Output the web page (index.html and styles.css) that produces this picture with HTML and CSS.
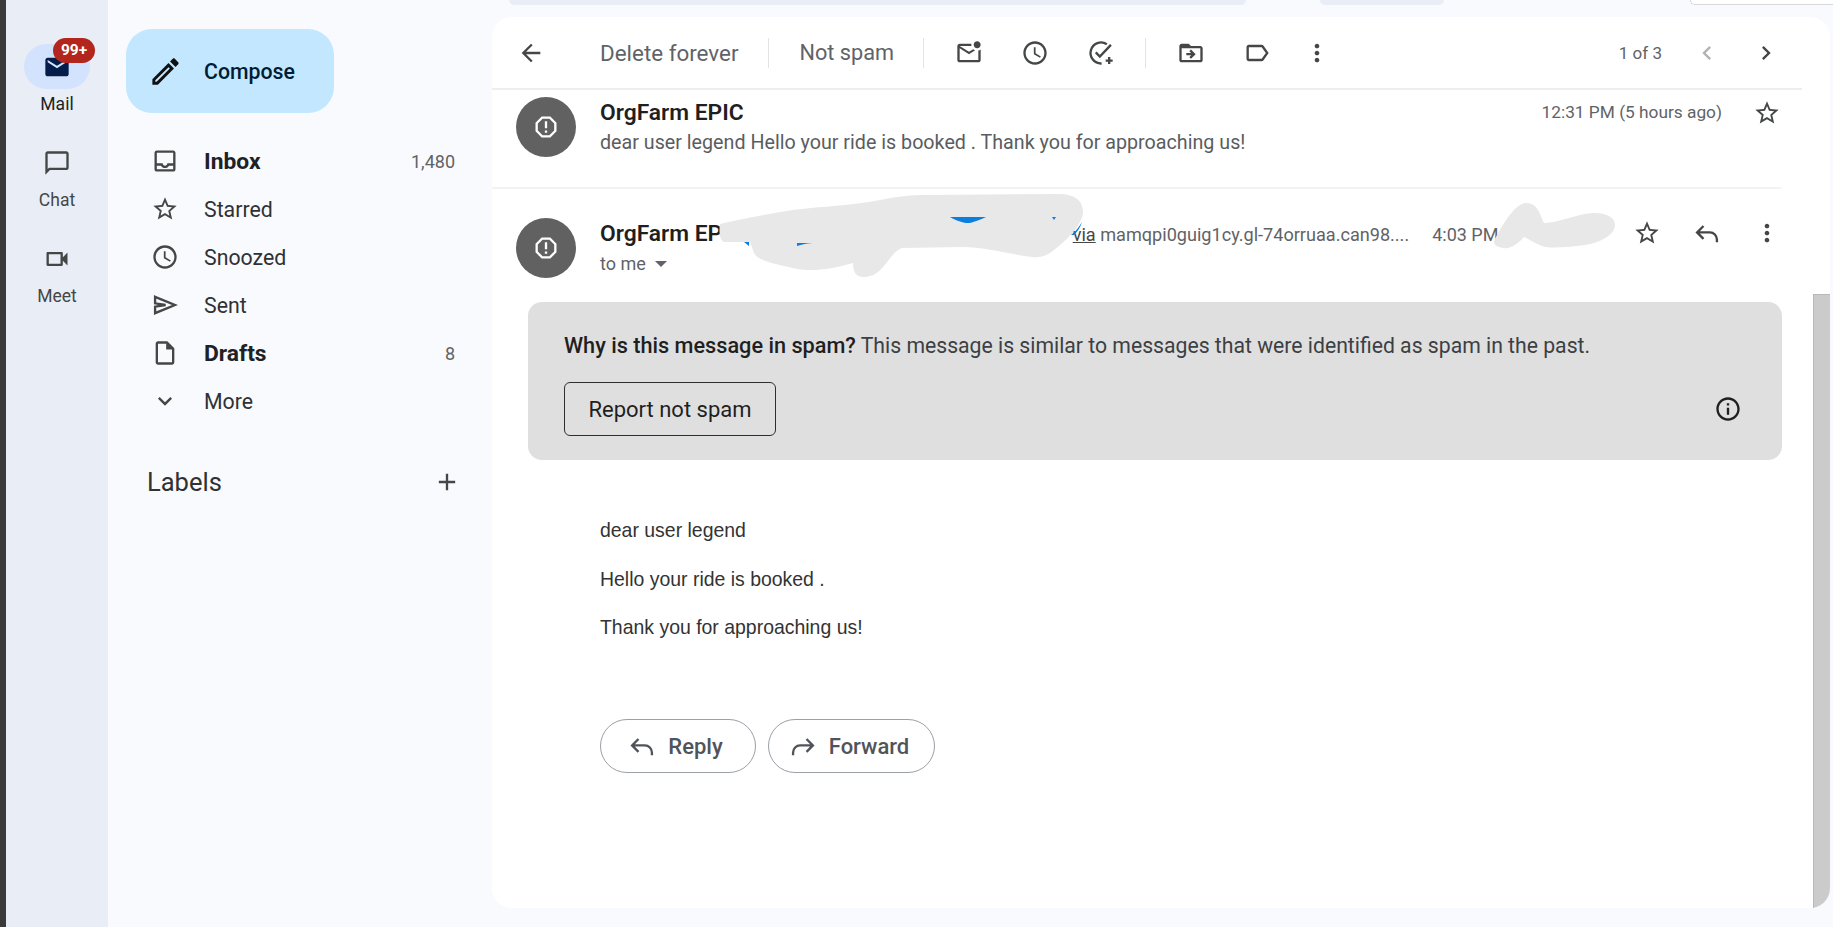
FILE: index.html
```html
<!DOCTYPE HTML>
<html lang="en">
<head>
	<title>Gmail - Spam</title>
	<meta charset="utf-8">
	<link rel="stylesheet" href="styles.css">
</head>
<body>

<!-- icon sprite -->
<svg class="sprite" xmlns="http://www.w3.org/2000/svg">
	<symbol id="i-edit" viewBox="0 0 24 24"><path d="M3 17.25V21h3.75L17.81 9.94l-3.75-3.75L3 17.25zM5.92 19H5v-.92l9.06-9.06.92.92L5.92 19zM20.71 7.04c.39-.39.39-1.02 0-1.41l-2.34-2.34c-.39-.39-1.02-.39-1.41 0l-1.83 1.83 3.75 3.75 1.83-1.83z"/></symbol>
	<symbol id="i-inbox" viewBox="0 0 24 24"><path d="M19 3H5c-1.1 0-2 .9-2 2v14c0 1.1.9 2 2 2h14c1.1 0 2-.9 2-2V5c0-1.1-.9-2-2-2zm0 16H5v-3h3.56c.69 1.19 1.97 2 3.44 2s2.75-.81 3.44-2H19v3zm0-5h-4.99c0 1.1-.9 2-2 2s-2-.9-2-2H5V5h14v9z"/></symbol>
	<symbol id="i-star" viewBox="0 0 24 24"><path d="M22 9.24l-7.19-.62L12 2 9.19 8.63 2 9.24l5.46 4.73L5.82 21 12 17.27 18.18 21l-1.63-7.03L22 9.24zM12 15.4l-3.76 2.27 1-4.28-3.32-2.88 4.38-.38L12 6.1l1.71 4.04 4.38.38-3.32 2.88 1 4.28L12 15.4z"/></symbol>
	<symbol id="i-clock" viewBox="0 0 24 24"><path d="M11.99 2C6.47 2 2 6.48 2 12s4.47 10 9.99 10C17.52 22 22 17.52 22 12S17.52 2 11.99 2zM12 20c-4.42 0-8-3.58-8-8s3.58-8 8-8 8 3.58 8 8-3.58 8-8 8zm.5-13H11v6l5.25 3.15.75-1.23-4.5-2.67z"/></symbol>
	<symbol id="i-send" viewBox="0 0 24 24"><path d="M3.5 5l17 7-17 7v-5.6l9-1.4-9-1.4z" fill="none" stroke="currentColor" stroke-width="2"/></symbol>
	<symbol id="i-draft" viewBox="0 0 24 24"><path d="M14 2H6c-1.1 0-2 .9-2 2v16c0 1.1.9 2 2 2h12c1.1 0 2-.9 2-2V8l-6-6zM6 20V4h7v5h5v11H6z"/></symbol>
	<symbol id="i-down" viewBox="0 0 24 24"><path d="M16.59 8.59L12 13.17 7.41 8.59 6 10l6 6 6-6z"/></symbol>
	<symbol id="i-plus" viewBox="0 0 24 24"><path d="M19 13h-6v6h-2v-6H5v-2h6V5h2v6h6v2z"/></symbol>
	<symbol id="i-chat" viewBox="0 0 24 24"><path d="M20 2H4c-1.1 0-2 .9-2 2v18l4-4h14c1.1 0 2-.9 2-2V4c0-1.1-.9-2-2-2zm0 14H5.17L4 17.17V4h16v12z"/></symbol>
	<symbol id="i-video" viewBox="0 0 24 24"><path d="M15 8v8H5V8h10m1-2H4c-.55 0-1 .45-1 1v10c0 .55.45 1 1 1h12c.55 0 1-.45 1-1v-3.5l4 4v-11l-4 4V7c0-.55-.45-1-1-1z"/></symbol>
	<symbol id="i-mail" viewBox="0 0 24 24"><path d="M20 4H4c-1.1 0-1.99.9-1.99 2L2 18c0 1.1.9 2 2 2h16c1.1 0 2-.9 2-2V6c0-1.1-.9-2-2-2zm0 4l-8 5-8-5V6l8 5 8-5v2z"/></symbol>
	<symbol id="i-back" viewBox="0 0 24 24"><path d="M20 11H7.83l5.59-5.59L12 4l-8 8 8 8 1.41-1.41L7.83 13H20v-2z"/></symbol>
	<symbol id="i-unread" viewBox="0 0 24 24"><path d="M22 8.98V18c0 1.1-.9 2-2 2H4c-1.1 0-2-.9-2-2V6c0-1.1.9-2 2-2h10.1c-.06.32-.1.66-.1 1s.04.68.1 1H4l8 5 3.67-2.29c.47.43 1.02.76 1.63.98L12 13 4 8v10h16V9.9c.74-.15 1.42-.48 2-.92zM16 5c0 1.66 1.34 3 3 3s3-1.34 3-3-1.34-3-3-3-3 1.34-3 3z"/></symbol>
	<symbol id="i-task" viewBox="0 0 24 24"><path d="M17 4.5A9 9 0 1 0 12.5 21M7.5 11.5l3.5 3.5 9.5-10M19 15.5v6M16 18.5h6" fill="none" stroke="currentColor" stroke-width="2"/></symbol>
	<symbol id="i-move" viewBox="0 0 24 24"><path d="M20 6h-8l-2-2H4c-1.1 0-2 .9-2 2v12c0 1.1.9 2 2 2h16c1.1 0 2-.9 2-2V8c0-1.1-.9-2-2-2zm0 12H4V8h16v10zm-8.01-9l-1.41 1.41L12.16 12H8v2h4.16l-1.59 1.59L11.99 17 16 13.01 11.99 9z"/></symbol>
	<symbol id="i-label" viewBox="0 0 24 24"><path d="M17.63 5.84C17.27 5.33 16.67 5 16 5L5 5.01C3.9 5.01 3 5.9 3 7v10c0 1.1.9 1.99 2 1.99L16 19c.67 0 1.27-.33 1.63-.84L22 12l-4.37-6.16zM16 17H5V7h11l3.55 5L16 17z"/></symbol>
	<symbol id="i-dots" viewBox="0 0 24 24"><path d="M12 8c1.1 0 2-.9 2-2s-.9-2-2-2-2 .9-2 2 .9 2 2 2zm0 2c-1.1 0-2 .9-2 2s.9 2 2 2 2-.9 2-2-.9-2-2-2zm0 6c-1.1 0-2 .9-2 2s.9 2 2 2 2-.9 2-2-.9-2-2-2z"/></symbol>
	<symbol id="i-prev" viewBox="0 0 24 24"><path d="M15.41 7.41L14 6l-6 6 6 6 1.41-1.41L10.83 12z"/></symbol>
	<symbol id="i-next" viewBox="0 0 24 24"><path d="M10 6L8.59 7.41 13.17 12l-4.58 4.59L10 18l6-6z"/></symbol>
	<symbol id="i-reply" viewBox="0 0 24 24"><path d="M9 6l-5.5 5.5L9 17M4 11.5h10.5a6 6 0 0 1 6 6V20" fill="none" stroke="currentColor" stroke-width="2"/></symbol>
	<symbol id="i-forward" viewBox="0 0 24 24"><path d="M15 6l5.5 5.5L15 17M20 11.5H9.5a6 6 0 0 0-6 6V20" fill="none" stroke="currentColor" stroke-width="2"/></symbol>
	<symbol id="i-report" viewBox="0 0 24 24"><path d="M15.73 3H8.27L3 8.27v7.46L8.27 21h7.46L21 15.73V8.27L15.73 3zM19 14.9L14.9 19H9.1L5 14.9V9.1L9.1 5h5.8L19 9.1v5.8zM11 7h2v6h-2zM11 15h2v2h-2z"/></symbol>
	<symbol id="i-info" viewBox="0 0 24 24"><path d="M11 7h2v2h-2zm0 4h2v6h-2zm1-9C6.48 2 2 6.48 2 12s4.48 10 10 10 10-4.48 10-10S17.52 2 12 2zm0 18c-4.41 0-8-3.59-8-8s3.59-8 8-8 8 3.59 8 8-3.59 8-8 8z"/></symbol>
</svg>

<div class="edge"></div>

<!-- app rail -->
<nav class="rail">
	<a class="rail-item rail-active">
		<span class="rail-pill">
			<svg class="icon"><use href="#i-mail"/></svg>
			<span class="badge">99+</span>
		</span>
		<span class="rail-name">Mail</span>
	</a>
	<a class="rail-item">
		<span class="rail-pill"><svg class="icon"><use href="#i-chat"/></svg></span>
		<span class="rail-name">Chat</span>
	</a>
	<a class="rail-item">
		<span class="rail-pill"><svg class="icon"><use href="#i-video"/></svg></span>
		<span class="rail-name">Meet</span>
	</a>
</nav>

<!-- folders -->
<aside class="sidebar">
	<button class="compose"><svg class="icon"><use href="#i-edit"/></svg>Compose</button>
	<ul class="folders">
		<li class="folder strong"><svg class="icon"><use href="#i-inbox"/></svg><span class="folder-name">Inbox</span><span class="count">1,480</span></li>
		<li class="folder"><svg class="icon"><use href="#i-star"/></svg><span class="folder-name">Starred</span></li>
		<li class="folder"><svg class="icon"><use href="#i-clock"/></svg><span class="folder-name">Snoozed</span></li>
		<li class="folder"><svg class="icon"><use href="#i-send"/></svg><span class="folder-name">Sent</span></li>
		<li class="folder strong"><svg class="icon"><use href="#i-draft"/></svg><span class="folder-name">Drafts</span><span class="count">8</span></li>
		<li class="folder"><svg class="icon"><use href="#i-down"/></svg><span class="folder-name">More</span></li>
	</ul>
	<div class="labels">
		<span>Labels</span>
		<svg class="icon"><use href="#i-plus"/></svg>
	</div>
</aside>

<div class="content">
	<!-- bottom edge of the search bar row, cut off by the screenshot -->
	<div class="top-strip">
		<div class="stub stub-search"></div>
		<div class="stub stub-chip"></div>
		<div class="stub stub-box"></div>
	</div>

	<main class="card">
		<div class="pane">
			<div class="toolbar">
				<svg class="icon tool-back"><use href="#i-back"/></svg>
				<span class="tool-text tool-delete">Delete forever</span>
				<span class="tool-sep"></span>
				<span class="tool-text tool-notspam">Not spam</span>
				<span class="tool-sep"></span>
				<span class="tool-icons">
					<svg class="icon"><use href="#i-unread"/></svg>
					<svg class="icon"><use href="#i-clock"/></svg>
					<svg class="icon"><use href="#i-task"/></svg>
				</span>
				<span class="tool-sep"></span>
				<span class="tool-icons tool-icons-2">
					<svg class="icon"><use href="#i-move"/></svg>
					<svg class="icon"><use href="#i-label"/></svg>
					<svg class="icon"><use href="#i-dots"/></svg>
				</span>
				<span class="pager">1 of 3</span>
				<svg class="icon pager-prev"><use href="#i-prev"/></svg>
				<svg class="icon pager-next"><use href="#i-next"/></svg>
			</div>

			<!-- collapsed message -->
			<div class="msg-collapsed">
				<span class="avatar"><svg class="icon"><use href="#i-report"/></svg></span>
				<div class="msg-main">
					<div class="sender">OrgFarm EPIC</div>
					<div class="snippet">dear user legend Hello your ride is booked . Thank you for approaching us!</div>
				</div>
				<span class="time">12:31 PM (5 hours ago)</span>
				<svg class="icon msg-star"><use href="#i-star"/></svg>
			</div>

			<!-- open message -->
			<div class="msg-head">
				<span class="avatar"><svg class="icon"><use href="#i-report"/></svg></span>
				<div class="msg-main">
					<div class="from-line">
						<span class="sender">OrgFarm EPIC</span>
						<span class="via"><u>via</u> mamqpi0guig1cy.gl-74orruaa.can98....</span>
						<span class="time time-open">4:03 PM</span>
					</div>
					<div class="to-line">to me <span class="caret"></span></div>
				</div>
				<span class="head-actions">
					<svg class="icon"><use href="#i-star"/></svg>
					<svg class="icon"><use href="#i-reply"/></svg>
					<svg class="icon"><use href="#i-dots"/></svg>
				</span>

				<!-- redaction scribbles painted over the sender address and date -->
				<svg class="scribble scribble-a" viewBox="0 0 364 85">
					<path d="M1 30C25 24 50 20 74 16C105 12 130 12 161 6C180 2 195 1 205 1L340 0C355 0 364 6 364 18C364 30 348 46 335 56C328 62 320 64 313 63C290 60 265 53 244 53L183 54C170 58 165 83 145 83C135 83 134 75 134 69C110 76 90 78 74 74C55 70 38 66 35 59L31 48L5 48C0 46 0 36 1 30Z" fill="#e8e8e8"/>
					<path d="M231 23L267 23C258 27 252 29 249 29C245 29 238 27 231 23ZM333 23L337 23L335 26ZM363 28C360 33 357 37 352 41L355 41C358 38 361 34 363 28ZM25 48L30 48L30 52ZM78 52C84 50 90 49 94 49L78 49Z" fill="#0b7ede"/>
				</svg>
				<svg class="scribble scribble-b" viewBox="0 0 121 46">
					<path d="M0 38C5 28 20 0 32 0C44 0 46 12 50 20C65 20 85 10 100 10C112 10 121 14 121 22C121 32 105 40 91 42C75 44 55 46 48 43C40 40 35 36 30 34C25 40 15 47 9 45C3 44 0 42 0 38Z" fill="#e8e8e8"/>
				</svg>
			</div>

			<div class="spam-box">
				<div class="spam-why"><b>Why is this message in spam?</b> This message is similar to messages that were identified as spam in the past.</div>
				<div class="spam-row">
					<button class="spam-btn">Report not spam</button>
					<svg class="icon"><use href="#i-info"/></svg>
				</div>
			</div>

			<div class="msg-body">
				<p>dear user legend</p>
				<p>Hello your ride is booked .</p>
				<p>Thank you for approaching us!</p>
			</div>

			<div class="msg-actions">
				<button class="pill-btn pill-reply"><svg class="icon"><use href="#i-reply"/></svg>Reply</button>
				<button class="pill-btn pill-forward"><svg class="icon"><use href="#i-forward"/></svg>Forward</button>
			</div>
		</div>
		<div class="scrolltrack"><div class="scrollthumb"></div></div>
	</main>
</div>

</body>
</html>
```

FILE: styles.css
```css
* {
	box-sizing: border-box;
}
html, body {
	height: 100%;
}
body {
	margin: 0;
	display: flex;
	height: 927px;
	overflow: hidden;
	background-color: #f8fafd;
	color: #1f1f1f;
	font-family: Roboto, "Noto Sans", sans-serif;
	font-size: 20px;
}
button {
	font-family: inherit;
	background: none;
	cursor: pointer;
}
.sprite {
	display: none;
}
.icon {
	width: 28px;
	height: 28px;
	fill: currentColor;
	flex: none;
	display: block;
}

.edge {
	width: 6px;
	flex: none;
	background-color: #3a3a3a;
}

/* rail */
.rail {
	width: 102px;
	flex: none;
	background-color: #e9eef6;
	padding-top: 44px;
	display: flex;
	flex-direction: column;
	align-items: center;
	color: #444746;
}
.rail-item {
	display: flex;
	flex-direction: column;
	align-items: center;
	height: 96px;
}
.rail-pill {
	position: relative;
	width: 66px;
	height: 45px;
	border-radius: 23px;
	display: flex;
	align-items: center;
	justify-content: center;
}
.rail-active .rail-pill {
	background-color: #d3e3fd;
	color: #041e49;
}
.rail-name {
	font-size: 17.5px;
	margin-top: 4px;
	line-height: 22px;
}
.rail-active .rail-name {
	color: #1f1f1f;
}
.badge {
	position: absolute;
	left: 29px;
	top: -6px;
	width: 42px;
	height: 25px;
	border-radius: 13px;
	background-color: #b3261e;
	color: #fff;
	font-size: 15.5px;
	font-weight: 700;
	line-height: 25px;
	text-align: center;
}

/* folders */
.sidebar {
	width: 384px;
	flex: none;
	padding: 29px 37px 0 18px;
}
.compose {
	width: 208px;
	height: 84px;
	border: none;
	border-radius: 26px;
	background-color: #c2e7ff;
	color: #001d35;
	font-size: 21.3px;
	font-weight: 500;
	display: flex;
	align-items: center;
	gap: 21px;
	padding: 0 0 0 22px;
}
.compose .icon {
	width: 35px;
	height: 35px;
	color: #111;
}
.folders {
	list-style: none;
	margin: 24px 0 0;
	padding: 0;
}
.folder {
	height: 48px;
	display: flex;
	align-items: center;
	color: #444746;
	font-size: 21.3px;
	padding-left: 25px;
}
.folder-name {
	margin-left: 25px;
	flex: 1;
	color: #303134;
}
.folder.strong .folder-name {
	font-size: 22.8px;
	font-weight: 700;
	color: #202124;
}
.count {
	font-size: 18px;
	color: #5f6368;
}
.labels {
	margin-top: 33px;
	padding-left: 21px;
	height: 48px;
	display: flex;
	align-items: center;
	justify-content: space-between;
	font-size: 25.5px;
	color: #303134;
}
.labels .icon {
	color: #444746;
	margin-right: -6px;
}

/* page column */
.content {
	flex: 1;
	display: flex;
	flex-direction: column;
	min-width: 0;
}
.top-strip {
	height: 17px;
	flex: none;
	display: flex;
	align-items: flex-start;
}
.stub {
	height: 5px;
	background-color: #e9eef6;
}
.stub-search {
	margin-left: 17px;
	width: 737px;
	border-radius: 0 0 18px 18px;
}
.stub-chip {
	margin-left: 74px;
	width: 124px;
	border-radius: 0 0 18px 18px;
}
.stub-box {
	margin-left: 246px;
	flex: 1;
	background-color: #fff;
	border: 1px solid #d5d7da;
	border-top: none;
	border-right: none;
	border-radius: 0 0 0 8px;
}

.card {
	width: 1338px;
	height: 891px;
	background-color: #fff;
	border-radius: 20px;
	overflow: hidden;
	display: flex;
}
.pane {
	width: 1321px;
	flex: none;
}
.scrolltrack {
	flex: 1;
	padding-top: 277px;
}
.scrollthumb {
	height: 100%;
	background-color: #cbcbcb;
	border-left: 1px solid #b8b8b8;
	border-top: 1px solid #b8b8b8;
}

/* toolbar */
.toolbar {
	height: 73px;
	width: 1310px;
	border-bottom: 2px solid #eeeeee;
	display: flex;
	align-items: center;
	color: #444746;
}
.tool-back {
	margin-left: 25px;
}
.tool-text {
	font-size: 22.4px;
	color: #5f6368;
}
.tool-delete {
	margin-left: 55px;
}
.tool-notspam {
	margin-left: 30px;
	font-size: 21.7px;
}
.tool-sep {
	width: 1px;
	height: 30px;
	background-color: #e3e3e3;
	margin-left: 30px;
}
.tool-notspam + .tool-sep {
	margin-left: 29px;
}
.tool-icons {
	display: flex;
	gap: 38px;
	margin-left: 31px;
}
.tool-icons + .tool-sep {
	margin-left: 30px;
}
.tool-icons-2 {
	margin-left: 31px;
}
.tool-icons-2 .icon:last-child {
	margin-left: -6px;
}
.pager {
	font-size: 17px;
	color: #5f6368;
	margin-left: auto;
}
.pager-prev {
	margin-left: 31px;
	color: #b0b3b5;
}
.pager-next {
	margin-left: 31px;
	margin-right: 22px;
}

/* messages */
.avatar {
	width: 60px;
	height: 60px;
	flex: none;
	border-radius: 50%;
	background-color: #616161;
	color: #fff;
	display: flex;
	align-items: center;
	justify-content: center;
	margin-left: 24px;
}
.msg-collapsed {
	height: 99px;
	width: 1289px;
	padding-top: 7px;
	border-bottom: 2px solid #f3f3f3;
	display: flex;
	align-items: flex-start;
	position: relative;
}
.msg-main {
	margin-left: 24px;
	flex: 1;
	min-width: 0;
}
.sender {
	font-size: 22.8px;
	font-weight: 600;
	color: #1f1f1f;
	line-height: 32px;
}
.snippet {
	font-size: 19.7px;
	color: #5a5d60;
	line-height: 28px;
}
.time {
	font-size: 17.3px;
	color: #5f6368;
	line-height: 31px;
}
.msg-star {
	color: #444746;
	margin: 2px 0 0 31px;
}
.msg-head {
	position: relative;
	height: 113px;
	padding-top: 29px;
	display: flex;
	align-items: flex-start;
}
.from-line {
	display: flex;
	align-items: center;
	height: 30px;
	margin-top: 1px;
}
.via {
	font-size: 18.1px;
	color: #5f6368;
	margin-left: 329px;
	white-space: nowrap;
}
.via u {
	color: #444746;
}
.time-open {
	margin-left: 23px;
	font-size: 18px;
}
.to-line {
	font-size: 18px;
	color: #5f6368;
	line-height: 24px;
	margin-top: 3px;
	display: flex;
	align-items: center;
}
.caret {
	width: 0;
	height: 0;
	margin-left: 9px;
	border-left: 6px solid transparent;
	border-right: 6px solid transparent;
	border-top: 6px solid #5f6368;
}
.head-actions {
	display: flex;
	gap: 32px;
	color: #444746;
	margin-right: 32px;
	margin-top: 1px;
}
.scribble {
	position: absolute;
	display: block;
}
.scribble-a {
	left: 227px;
	top: 5px;
	width: 364px;
	height: 85px;
}
.scribble-b {
	left: 1002px;
	top: 14px;
	width: 121px;
	height: 46px;
}

/* spam notice */
.spam-box {
	margin-left: 36px;
	width: 1254px;
	height: 158px;
	border-radius: 14px;
	background-color: #dfdfdf;
	padding: 28px 36px 0;
}
.spam-why {
	font-size: 21.2px;
	line-height: 31px;
	color: #3c4043;
}
.spam-why b {
	font-size: 21.7px;
	font-weight: 500;
	color: #1f1f1f;
}
.spam-row {
	margin-top: 21px;
	display: flex;
	align-items: center;
	justify-content: space-between;
}
.spam-btn {
	width: 212px;
	height: 54px;
	border: 1px solid #2f2f2f;
	border-radius: 6px;
	color: #1f1f1f;
	font-size: 22px;
	padding: 0;
}
.spam-row .icon {
	margin-right: 4px;
}

/* body */
.msg-body {
	margin: 0 0 0 108px;
	padding-top: 59px;
	font-family: "Liberation Sans", Arial, sans-serif;
	font-size: 19.45px;
	color: #333;
}
.msg-body p {
	margin: 0 0 26.5px;
	line-height: 22px;
}
.msg-actions {
	margin: 81px 0 0 108px;
	display: flex;
	gap: 12px;
}
.pill-btn {
	height: 54px;
	border: 1px solid #9aa0a6;
	border-radius: 27px;
	color: #50545a;
	font-size: 22px;
	font-weight: 500;
	display: flex;
	align-items: center;
	justify-content: center;
	gap: 12px;
	padding: 0 5px 0 0;
}
.pill-reply {
	width: 156px;
}
.pill-forward {
	width: 167px;
}
```
